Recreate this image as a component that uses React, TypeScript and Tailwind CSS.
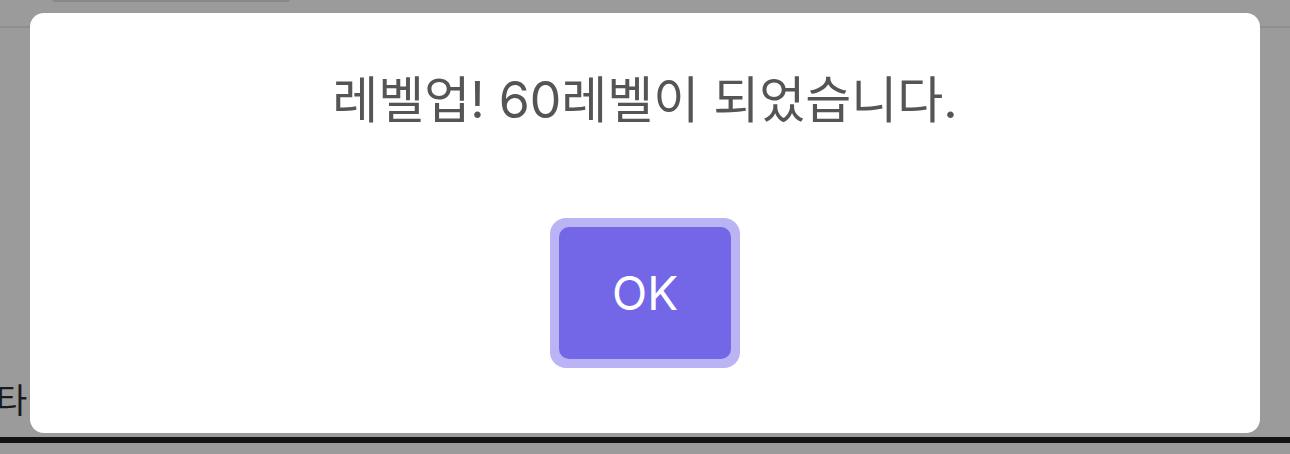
export default function App() {
  return (
    <div
      className="relative w-[1290px] h-[454px] overflow-hidden bg-[#9b9b9b]"
      style={{ fontFamily: 'Inter, "Noto Sans CJK KR", sans-serif' }}
    >
      {/* dimmed page behind the dialog */}
      <div className="flex flex-col h-full">
        <div className="h-[28px] border-b-2 border-[#8e8e8e] px-[52px]">
          <div className="w-[238px] h-[3px] -mt-px rounded-b-[6px] bg-[#88888c]" />
        </div>
        <div className="flex-1 flex items-end">
          <div className="text-[34px] leading-[40px] text-[#1a1a1a] -ml-[4px] mb-[16px]">타이틀</div>
        </div>
        <div className="h-[6px] bg-[#131315]" />
        <div className="h-[11px]" />
      </div>

      {/* level-up dialog */}
      <div className="absolute left-[30px] top-[13px] w-[1230px] h-[420px] rounded-[14px] bg-white flex flex-col items-center">
        <div className="mt-[57px] text-[50px] leading-[60px] text-[#555555]">
          레벨업! 60레벨이 되었습니다.
        </div>
        <div className="mt-[88px] rounded-[16px] bg-[#bab4f4] p-[9px]">
          <button className="w-[172px] h-[132px] rounded-[10px] bg-[#7367e8] text-white text-[46px] leading-none">
            OK
          </button>
        </div>
      </div>
    </div>
  );
}
